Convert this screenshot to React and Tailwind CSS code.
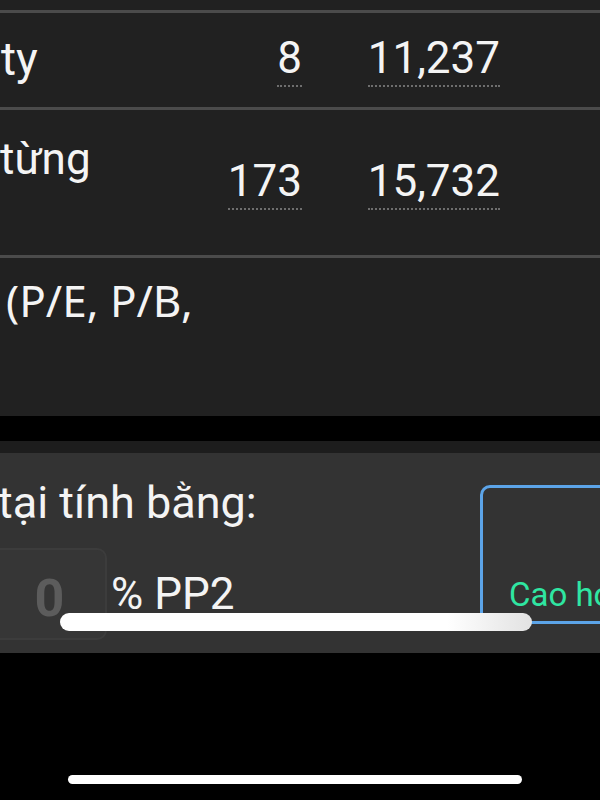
export default function App() {
  const cell = "inline-block leading-none pb-[5px] border-b-2 border-dotted border-[#6e6e6e]";

  return (
    <div className="w-[600px] h-[800px] overflow-hidden bg-black text-[#f4f4f4] font-['Roboto',sans-serif]">
      {/* stats table */}
      <div className="bg-[#212121] pt-[10px]">
        <div className="h-[3px] bg-[#4b4b4b]" />

        <div className="flex h-[94px] pt-[23px] pr-[100px]">
          <div className="flex-1 min-w-0 text-[46px] leading-none ml-[1px]">ty</div>
          <div className="w-[110px] text-right text-[44px] leading-none">
            <span className={cell}>8</span>
          </div>
          <div className="w-[198px] text-right text-[44px] leading-none">
            <span className={cell}>11,237</span>
          </div>
        </div>
        <div className="h-[3px] bg-[#4b4b4b]" />

        <div className="flex h-[145px] pr-[100px]">
          <div className="flex-1 min-w-0 pt-[27px] text-[44px] leading-none">từng</div>
          <div className="w-[110px] pt-[49px] text-right text-[44px] leading-none">
            <span className={cell}>173</span>
          </div>
          <div className="w-[198px] pt-[49px] text-right text-[44px] leading-none">
            <span className={cell}>15,732</span>
          </div>
        </div>
        <div className="h-[3px] bg-[#4b4b4b]" />

        <div className="h-[158px] pt-[20px] pl-[6px] font-['Noto_Sans',sans-serif] text-[44px] leading-none">
          (P/E, P/B,
        </div>
      </div>

      <div className="h-[25px] bg-black" />

      {/* valuation panel */}
      <div className="h-[12px] bg-[#1d1d1d]" />
      <div className="relative flex h-[200px] bg-[#333333] overflow-hidden">
        <div className="w-[480px] shrink-0">
          <div className="pt-[27px] text-[45px] leading-none -ml-[2px]">tại tính bằng:</div>
          <div className="flex items-start mt-[23px]">
            <div className="-ml-[20px] w-[127px] h-[92px] shrink-0 rounded-[10px] border-2 border-[#3c3c3c] bg-[#363636] flex items-center justify-center pt-[10px] pl-[12px] text-[52px] font-bold leading-none text-[#5c5c5c]">
              0
            </div>
            <div className="ml-[4px] mt-[24px] text-[44px] leading-none">% PP2</div>
          </div>
        </div>
        <div className="shrink-0 mt-[32px] w-[160px] h-[139px] rounded-[10px] border-[3px] border-[#5ca4e8] flex flex-col justify-end pl-[26px] pb-[10px]">
          <span className="text-[33px] leading-none text-[#2fe6a2] whitespace-nowrap">Cao hơn</span>
        </div>

        {/* horizontal scroll indicator */}
        <div className="absolute left-[60px] top-[160px] w-[472px] h-[18px] rounded-full bg-gradient-to-r from-white from-[82%] to-[#e2e2e2]" />
      </div>

      <div className="pt-[122px]">
        <div className="ml-[68px] w-[454px] h-[9px] rounded-full bg-white" />
      </div>
    </div>
  );
}
